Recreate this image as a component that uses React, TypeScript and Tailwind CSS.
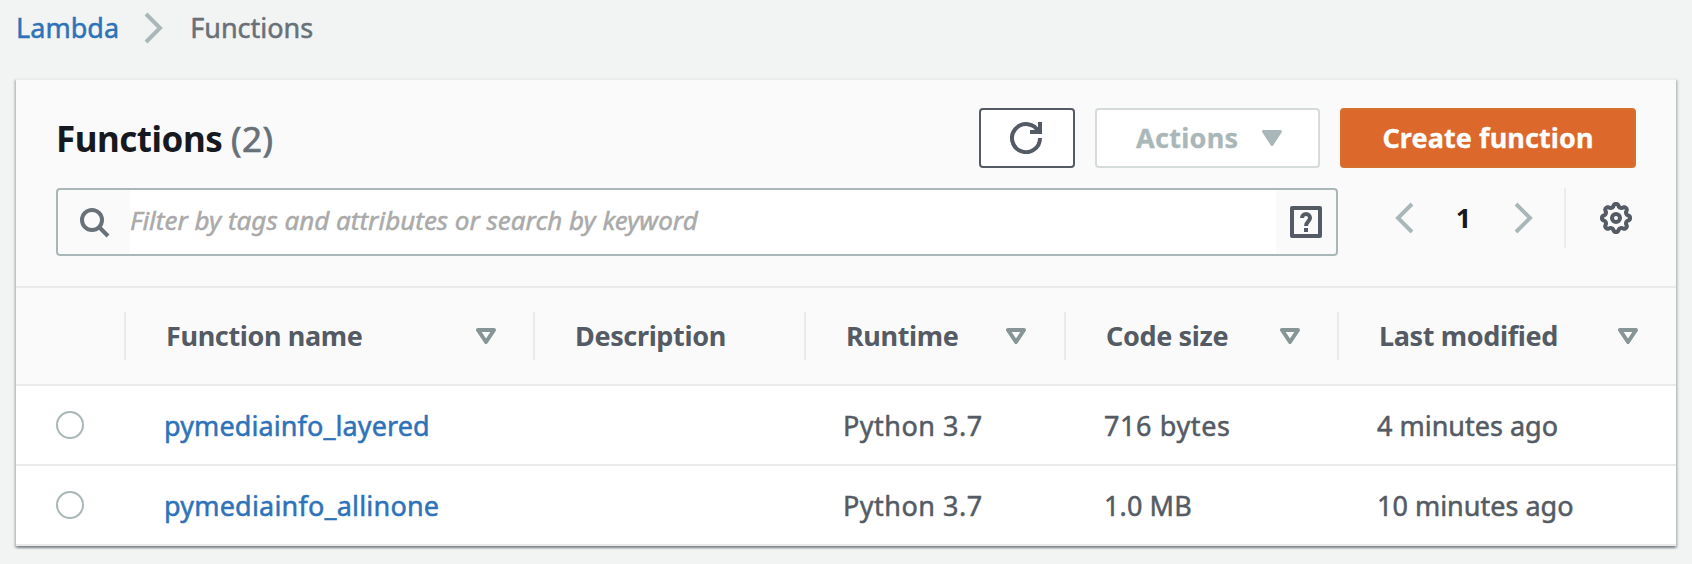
import type { ReactNode } from "react";

function Icon({ children, className = "" }: { children: ReactNode; className?: string }) {
  return (
    <svg viewBox="0 0 16 16" fill="none" stroke="currentColor" strokeWidth="2" className={`size-8 shrink-0 ${className}`}>
      {children}
    </svg>
  );
}

// Closed outline of a cog whose radius swings between valleys and eight rounded teeth.
const gearOutline =
  Array.from({ length: 96 }, (_, i) => {
    const angle = (i / 96) * Math.PI * 2;
    const radius = 6.3 + 0.8 * Math.tanh(1.6 * Math.cos(8 * angle));
    const x = (8 + radius * Math.cos(angle)).toFixed(2);
    const y = (8 + radius * Math.sin(angle)).toFixed(2);
    return `${i === 0 ? "M" : "L"}${x} ${y}`;
  }).join("") + "z";

const AngleLeft = () => <Icon><path d="M12 1 5 8l7 7" /></Icon>;
const AngleRight = () => <Icon><path d="m4 1 7 7-7 7" /></Icon>;
const Refresh = () => (
  <Icon className="-ml-0.5">
    <path d="M10 5h5V0" />
    <path d="M15 8a7 7 0 1 1-.7-3" />
  </Icon>
);
const Search = () => (
  <Icon>
    <circle cx="7" cy="7" r="5" />
    <path d="m15 15-4.5-4.5" />
  </Icon>
);
const Help = () => (
  <Icon>
    <path d="M1 1h14v14H1z" strokeLinejoin="round" />
    <path d="M6 6a2 2 0 1 1 4 0c0 1.600-2 1.800-2 4M8 11v2" />
  </Icon>
);
const Gear = () => (
  <Icon>
    <path strokeLinejoin="round" d={gearOutline} />
    <circle cx="8" cy="8" r="2" />
  </Icon>
);
const SortCaret = () => (
  <svg viewBox="0 0 20 16" fill="none" stroke="currentColor" strokeWidth="4" strokeLinejoin="round" className="h-4 w-5 shrink-0 text-[#879596]">
    <path d="M2 2h16l-8 12z" />
  </svg>
);

type Column = { label: string; width: string; sortable: boolean };
const columns: Column[] = [
  { label: "Function name", width: "w-[409px] pr-[37px]", sortable: true },
  { label: "Description", width: "w-[271px]", sortable: false },
  { label: "Runtime", width: "w-[260px] pr-[38px]", sortable: true },
  { label: "Code size", width: "w-[273px] pr-[37px]", sortable: true },
  { label: "Last modified", width: "w-[339px] pr-[38px]", sortable: true },
];

const rows = [
  { name: "pymediainfo_layered", nameTracking: "tracking-[0.1px]", runtime: "Python 3.7", size: "716 bytes", sizeTracking: "tracking-[0.6px]", modified: "4 minutes ago" },
  { name: "pymediainfo_allinone", nameTracking: "tracking-[0.2px]", runtime: "Python 3.7", size: "1.0 MB", sizeTracking: "tracking-[0.1px]", modified: "10 minutes ago" },
];

export default function App() {
  return (
    <div className="h-[564px] w-[1692px] overflow-hidden bg-[#f2f3f3] px-4 font-['Noto_Sans',sans-serif] text-[27px] leading-9 text-[#545b64]">
      <nav className="flex h-[78px] items-start pt-[10px] [-webkit-text-stroke:0.5px]">
        <a className="tracking-[0.05px] text-[#2e73b8]">Lambda</a>
        <span className="ml-[19px] mt-0.5 text-[#aab7b8]"><AngleRight /></span>
        <span className="ml-5 text-[#687078]">Functions</span>
      </nav>

      <main className="h-[468px] border-t-2 border-[#eaeded] bg-white shadow-[0_2px_2px_0_rgba(0,28,36,0.3),2px_2px_2px_0_rgba(0,28,36,0.15),-2px_2px_2px_0_rgba(0,28,36,0.15)]">
        <header className="h-[208px] border-b-2 border-[#eaeaea] bg-[#fafafa] px-10 pt-7">
          <div className="flex h-[60px] items-center">
            <h1 className="pt-0.5 text-[35px] font-bold leading-[60px] tracking-[-0.48px] text-[#16191f]">
              Functions <span className="font-normal tracking-[0.5px] text-[#687078] [-webkit-text-stroke:0.7px]">(2)</span>
            </h1>
            <button className="ml-auto flex h-[60px] w-24 items-center justify-center rounded border-2 border-[#545b64] bg-white">
              <Refresh />
            </button>
            <button className="ml-5 flex h-[60px] w-[225px] items-center rounded border-2 border-[#d5dbdb] bg-white pl-[39px] font-bold tracking-[0.28px] text-[#aab7b8] [-webkit-text-stroke:0.3px]">
              Actions
              <svg viewBox="0 0 20 16" className="ml-6 h-4 w-5" fill="currentColor" stroke="currentColor" strokeWidth="3" strokeLinejoin="round">
                <path d="M1.500 1.500h17L10 14.500z" />
              </svg>
            </button>
            <button className="ml-5 h-[60px] w-[296px] rounded border-2 border-[#d5702f] bg-[#dc682b] font-bold tracking-[0.1px] text-white [-webkit-text-stroke:0.3px]">
              Create function
            </button>
          </div>

          <div className="mt-5 flex">
            <div className="flex h-[68px] w-[1282px] items-stretch rounded border-2 border-[#aab7b8] bg-[#fafafa]">
              <div className="flex w-[72px] items-center pl-5 text-[#687078]"><Search /></div>
              <div className="flex-1 bg-white pt-3 text-[26px] italic text-[#aaa] [-webkit-text-stroke:0.5px]">
                Filter by tags and attributes or search by keyword
              </div>
              <div className="flex w-[60px] items-center pl-3.5"><Help /></div>
            </div>
            <div className="ml-[50px] flex h-[60px] items-center text-[#aab7b8]">
              <AngleLeft />
              <span className="w-[88px] pr-px text-center font-bold text-[#16191f]">1</span>
              <AngleRight />
            </div>
            <div className="ml-6 flex h-[60px] items-center border-l-2 border-[#eaeded] pl-[34px]"><Gear /></div>
          </div>
        </header>

        <div className="flex h-[98px] items-center border-b-2 border-[#eaeaea] bg-[#fafafa] pl-[108px]">
          {columns.map((c) => (
            <div key={c.label} className={`flex h-12 shrink-0 items-center justify-between border-l-2 border-[#eaeaea] pl-10 font-bold tracking-[-0.36px] ${c.width}`}>
              <span>{c.label}</span>
              {c.sortable && <SortCaret />}
            </div>
          ))}
        </div>

        {rows.map((r) => (
          <div key={r.name} className="flex h-20 items-center border-b-2 border-[#eaeaea] pl-10 [-webkit-text-stroke:0.5px]">
            <span className="size-7 shrink-0 rounded-full border-2 border-[#aab7b8] bg-white" />
            <a className={`ml-20 w-[679px] shrink-0 pt-0.5 text-[#2e73b8] ${r.nameTracking}`}>{r.name}</a>
            <span className="w-[261px] shrink-0 pt-0.5 tracking-[0.5px]">{r.runtime}</span>
            <span className={`w-[273px] shrink-0 pt-0.5 ${r.sizeTracking}`}>{r.size}</span>
            <span className="pt-0.5">{r.modified}</span>
          </div>
        ))}
      </main>
    </div>
  );
}
